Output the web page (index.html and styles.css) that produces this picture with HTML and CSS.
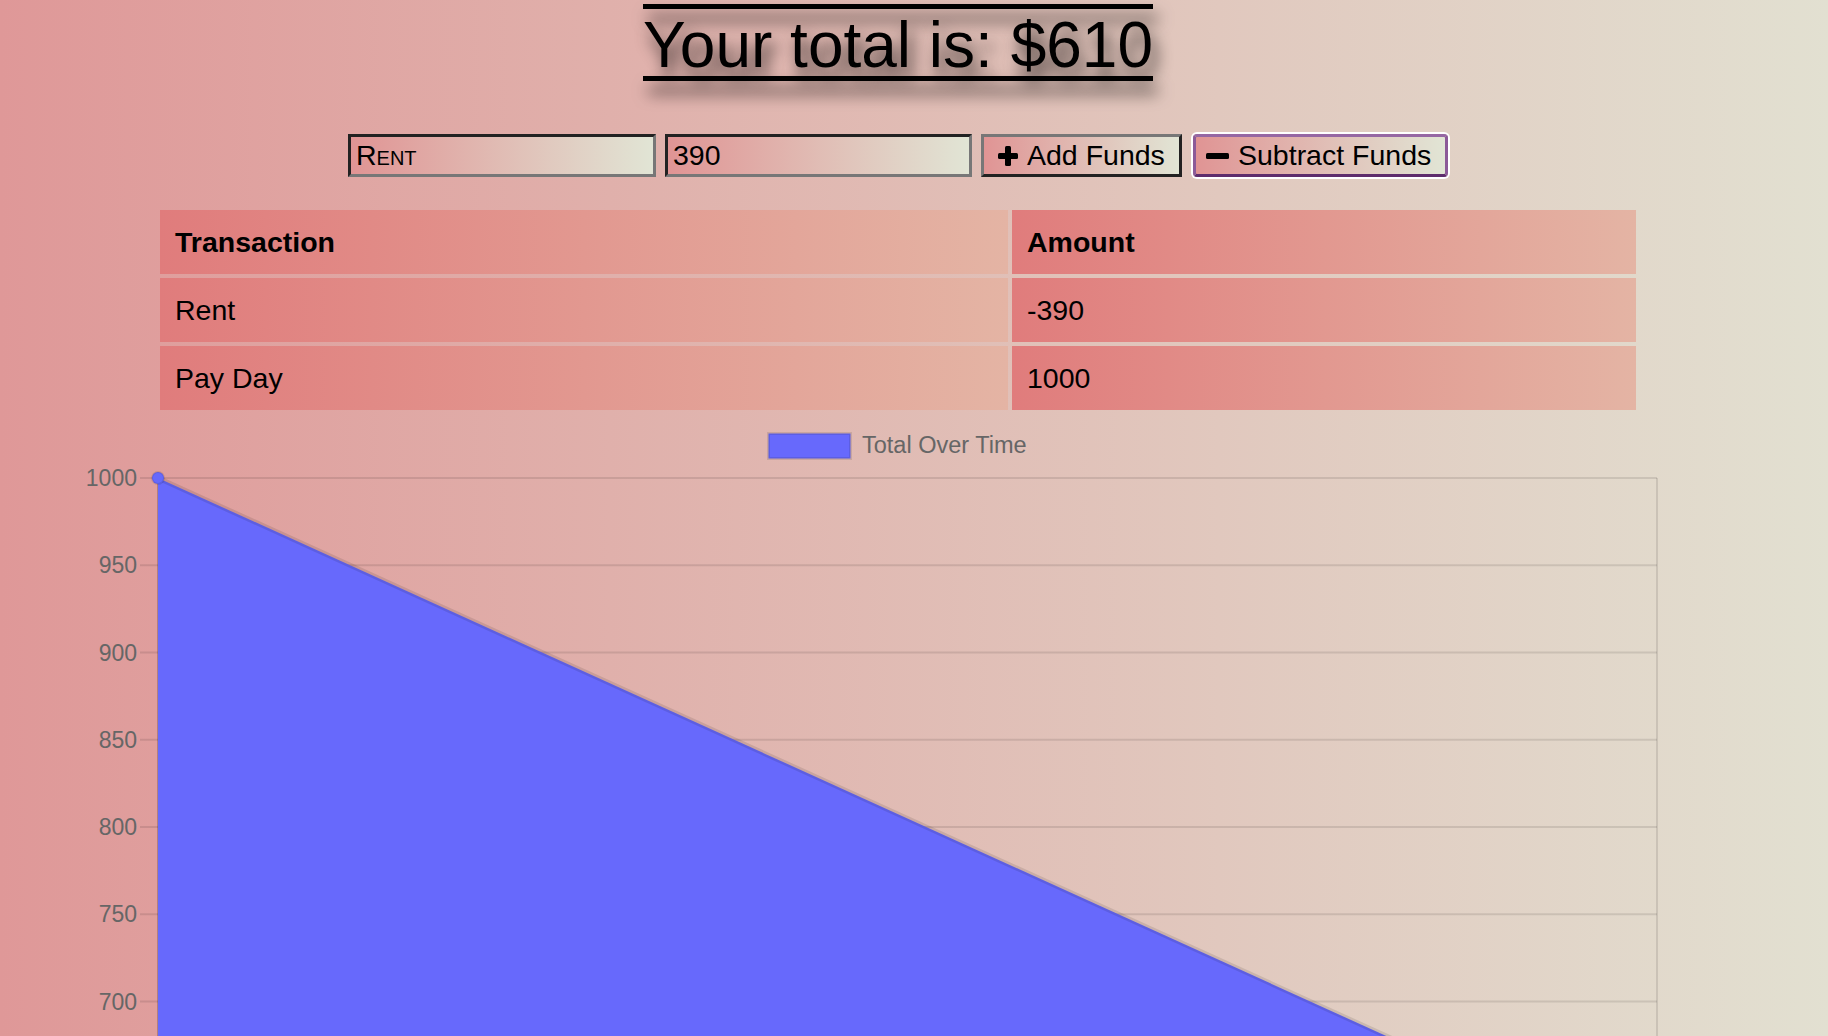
FILE: index.html
```html
<!DOCTYPE html>
<html lang="en">
<head>
<meta charset="utf-8">
<title>Budget Tracker</title>
<link rel="stylesheet" href="styles.css">
</head>
<body>
<main class="page">
  <h1 class="total">Your total is: $610</h1>

  <form class="controls">
    <input class="field field-name" type="text" value="Rent">
    <input class="field" type="number" value="390">
    <button class="btn" type="button">
      <svg class="icon" width="20" height="20" viewBox="0 0 20 20"><rect x="7" y="0" width="6" height="20" rx="1.5"/><rect x="0" y="7" width="20" height="6" rx="1.5"/></svg>
      <span>Add Funds</span>
    </button>
    <button class="btn btn-focus" type="button">
      <svg class="icon" width="23" height="6" viewBox="0 0 23 6"><rect x="0" y="0" width="23" height="6" rx="1.5"/></svg>
      <span>Subtract Funds</span>
    </button>
  </form>

  <table class="ledger">
    <thead>
      <tr><th class="col-tx">Transaction</th><th>Amount</th></tr>
    </thead>
    <tbody>
      <tr><td>Rent</td><td>-390</td></tr>
      <tr><td>Pay Day</td><td>1000</td></tr>
    </tbody>
  </table>

  <svg class="chart" width="1700" height="806" viewBox="48 414 1700 806">
    <g class="legend">
      <rect x="768.5" y="433.5" width="82" height="25" class="swatch"/>
      <text x="862" y="453" class="legend-text">Total Over Time</text>
    </g>
    <g class="grid">
      <line x1="140" y1="478" x2="1657" y2="478"/>
      <line x1="140" y1="565.3" x2="1657" y2="565.3"/>
      <line x1="140" y1="652.5" x2="1657" y2="652.5"/>
      <line x1="140" y1="739.8" x2="1657" y2="739.8"/>
      <line x1="140" y1="827" x2="1657" y2="827"/>
      <line x1="140" y1="914.3" x2="1657" y2="914.3"/>
      <line x1="140" y1="1001.5" x2="1657" y2="1001.5"/>
      <line x1="140" y1="1088.8" x2="1657" y2="1088.8"/>
      <line x1="140" y1="1176" x2="1657" y2="1176"/>
      <line x1="1657" y1="478" x2="1657" y2="1195"/>
    </g>
    <line class="axis" x1="158" y1="478" x2="158" y2="1195"/>
    <g class="ticks">
      <text x="137" y="486">1000</text>
      <text x="137" y="573.3">950</text>
      <text x="137" y="660.5">900</text>
      <text x="137" y="747.8">850</text>
      <text x="137" y="835">800</text>
      <text x="137" y="922.3">750</text>
      <text x="137" y="1009.5">700</text>
    </g>
    <polygon class="area" points="158,478 1657,1159 1657,1176 158,1176"/>
    <line class="series" x1="158" y1="478" x2="1657" y2="1159"/>
    <circle class="point" cx="158" cy="478" r="6"/>
    <circle class="point" cx="1657" cy="1159" r="6"/>
  </svg>
</main>
</body>
</html>
```

FILE: styles.css
```css
html, body {
  margin: 0;
  padding: 0;
}

body {
  background: linear-gradient(to right, #df9898, #e2e0d1);
  font-family: "Liberation Sans", Arial, Helvetica, sans-serif;
  color: #000;
  padding-right: 32px;
  overflow-x: hidden;
}

.page {
  display: flex;
  flex-direction: column;
  align-items: center;
}

.total {
  margin: 0;
  font-size: 64px;
  font-weight: normal;
  line-height: 90px;
  text-align: center;
  text-decoration: underline overline;
  text-decoration-thickness: 5px;
  text-underline-offset: 9px;
  text-shadow: 5px 12px 16px rgba(0, 0, 0, 0.8);
}

.controls {
  margin: 44px 0 0;
  display: flex;
  justify-content: center;
  gap: 9px;
}

.field,
.btn {
  box-sizing: border-box;
  height: 43px;
  margin: 0;
  font-family: "Liberation Sans", Arial, Helvetica, sans-serif;
  font-size: 28.5px;
  color: #000;
  background: linear-gradient(to right, #e09494, #e1e5d5);
  border: 3px solid;
  outline: none;
}

.field {
  width: 308px;
  padding: 0 5px;
  border-color: #222 #777 #777 #222;
  -moz-appearance: textfield;
}

.field::-webkit-outer-spin-button,
.field::-webkit-inner-spin-button {
  -webkit-appearance: none;
  margin: 0;
}

.field + .field {
  width: 307px;
}

.field-name {
  font-variant: small-caps;
}

.btn {
  display: inline-flex;
  align-items: center;
  gap: 9px;
  width: 201px;
  padding: 0 0 0 14px;
  border-color: #777 #222 #222 #777;
  cursor: pointer;
}

.btn-focus {
  width: 255px;
  margin-left: 2px;
  padding-left: 10px;
  border-radius: 4px;
  border-color: #9667a3 #8c5a98 #5e2c6c #8c5a98;
  box-shadow: 0 0 0 2px #fff;
}

.icon {
  display: block;
  fill: #000;
  flex: none;
}

.ledger {
  margin-top: 29px;
  width: 1484px;
  table-layout: fixed;
  border-collapse: separate;
  border-spacing: 4px;
  font-size: 28.5px;
}

.ledger th,
.ledger td {
  box-sizing: border-box;
  padding: 16px 15px;
  line-height: 32px;
  text-align: left;
  background: linear-gradient(to right, #e07c7c, #e4b4a4);
}

.ledger th {
  font-weight: bold;
}

.col-tx {
  width: 848px;
}

.chart {
  display: block;
  font-family: "Liberation Sans", Arial, Helvetica, sans-serif;
}

.swatch {
  fill: #6769fc;
  stroke: rgba(0, 0, 0, 0.1);
  stroke-width: 3;
}

.legend-text {
  font-size: 23.5px;
  fill: #666;
}

.grid line {
  stroke: rgba(0, 0, 0, 0.1);
  stroke-width: 2;
}

.axis {
  stroke: rgba(0, 0, 0, 0.2);
  stroke-width: 2;
}

.ticks text {
  font-size: 23px;
  fill: #666;
  text-anchor: end;
}

.area {
  fill: #6769fc;
}

.series {
  stroke: rgba(0, 0, 0, 0.1);
  stroke-width: 5;
}

.point {
  fill: #6769fc;
  stroke: rgba(0, 0, 0, 0.1);
  stroke-width: 2;
}
```
